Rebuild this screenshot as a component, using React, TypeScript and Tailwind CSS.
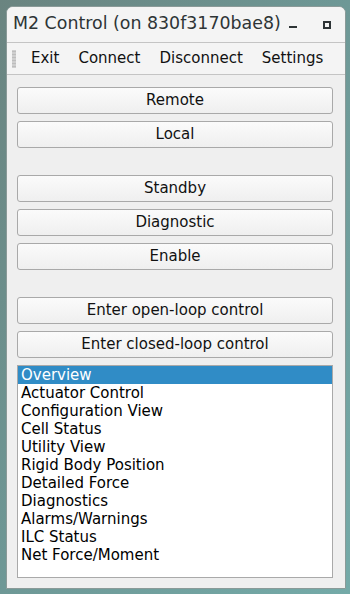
import React from "react";

const font = { fontFamily: '"DejaVu Sans", "Liberation Sans", sans-serif' };

function Btn({ label }: { label: string }) {
  return (
    <div className="h-[27px] shrink-0 w-full rounded-[3px] border border-[#a9a9a9] bg-gradient-to-b from-[#fbfbfb] to-[#efefef] flex items-center justify-center text-[15px] text-[#111]">
      {label}
    </div>
  );
}

const items = [
  "Overview",
  "Actuator Control",
  "Configuration View",
  "Cell Status",
  "Utility View",
  "Rigid Body Position",
  "Detailed Force",
  "Diagnostics",
  "Alarms/Warnings",
  "ILC Status",
  "Net Force/Moment",
];

export default function App() {
  return (
    <div
      className="w-[350px] h-[594px] bg-gradient-to-br from-[#6a8480] via-[#6e9896] to-[#74aaa8] pt-[6px] pl-[6px]"
      style={font}
    >
      <div className="w-[340px] h-[583px] flex flex-col rounded-t-[7px] overflow-hidden border border-[#8a9a98] bg-[#efefef]">
        <div className="h-[36px] shrink-0 flex items-center bg-[#f4f4f4] border-b border-[#c4c4c4] pl-[6px] pr-[14px]">
          <span className="text-[17.4px] text-[#2e3436] leading-none flex-1 pb-[1px]">M2 Control (on 830f3170bae8)</span>
          <span className="w-[8px] h-[2px] bg-[#2e3436] mt-[5px] mr-[26px]" />
          <span className="w-[8px] h-[8px] border-2 border-[#2e3436]" />
        </div>
        <div className="h-[32px] shrink-0 flex items-center bg-[#f4f4f4] border-b border-[#c4c4c4] pl-[5px]">
          <div className="w-[4px] h-[18px] mr-[15px] bg-[radial-gradient(#bdbdbd_0.8px,transparent_0.9px)] bg-[length:2px_3px]" />
          <div className="flex gap-[19px] text-[15px] text-[#111]">
            <span>Exit</span>
            <span>Connect</span>
            <span>Disconnect</span>
            <span>Settings</span>
          </div>
        </div>
        <div className="flex-1 flex flex-col pt-[12px] pl-[10px] pr-[12px] pb-[10px] gap-[7px]">
          <Btn label="Remote" />
          <Btn label="Local" />
          <div className="h-[13px] shrink-0" />
          <Btn label="Standby" />
          <Btn label="Diagnostic" />
          <Btn label="Enable" />
          <div className="h-[13px] shrink-0" />
          <Btn label="Enter open-loop control" />
          <Btn label="Enter closed-loop control" />
          <div className="flex-1 bg-white border border-[#a9a9a9] text-[15px] text-black leading-[18px]">
            {items.map((it, i) => (
              <div
                key={it}
                className={
                  "h-[18px] pl-[3px] " + (i === 0 ? "bg-[#308cc6] text-white" : "")
                }
              >
                {it}
              </div>
            ))}
          </div>
        </div>
      </div>
    </div>
  );
}
